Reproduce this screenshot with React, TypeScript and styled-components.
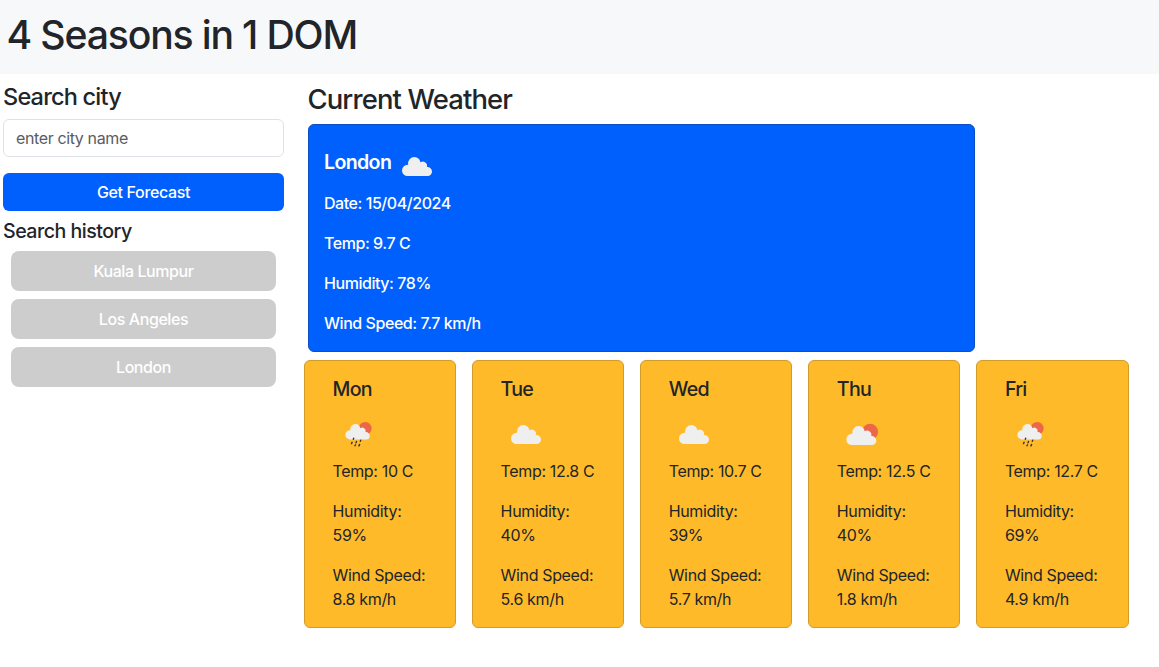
import React from "react";
import styled, { createGlobalStyle } from "styled-components";

const GlobalStyle = createGlobalStyle`
  *, *::before, *::after { box-sizing: border-box; }
  body {
    margin: 0;
    background: #fff;
    color: #212529;
    font-family: Inter, "Liberation Sans", sans-serif;
    font-size: 16px;
    line-height: 24px;
    letter-spacing: -0.35px;
  }
  h1, h2, h3, h4, h5, p { margin: 0; font-weight: 550; white-space: nowrap; }
  p { font-weight: 420; }
`;

const Header = styled.header`
  height: 74px;
  padding: 11px 6.5px;
  background: #f7f8fa;
`;

const PageTitle = styled.h1`
  font-size: 39.2px;
  line-height: 48px;
  letter-spacing: -1.18px;
`;

const Layout = styled.div`
  display: flex;
  padding-top: 8px;
`;

const Sidebar = styled.aside`
  width: 287px;
  padding: 0 3px;
  margin-right: 17px;
`;

const Heading = styled.h3<{ $size: number; $line: number; $track: number }>`
  font-size: ${(p) => p.$size}px;
  line-height: ${(p) => p.$line}px;
  letter-spacing: ${(p) => p.$track}px;
`;

const SearchForm = styled.form`
  display: flex;
  flex-direction: column;
  gap: 16px;
  margin: 8px 0;
`;

const CityInput = styled.input`
  height: 38px;
  padding: 6px 12px;
  border: 1px solid #dee2e6;
  border-radius: 6px;
  font: inherit;
  letter-spacing: inherit;
  outline: none;
  &::placeholder { color: #595c5f; opacity: 1; letter-spacing: -0.38px; }
`;

const SubmitButton = styled.button`
  height: 38px;
  border: 0;
  border-radius: 6px;
  background: #0060fd;
  color: #fff;
  font: inherit;
  font-weight: 450;
  letter-spacing: inherit;
`;

const HistoryList = styled.div`
  display: flex;
  flex-direction: column;
  gap: 8px;
  padding: 8px;
`;

const HistoryButton = styled.button`
  height: 40px;
  border: 0;
  border-radius: 8px;
  background: #cdcdcd;
  color: #fff;
  font: inherit;
  font-weight: 450;
  letter-spacing: -0.42px;
`;

const Main = styled.main`
  width: 824.5px;
`;

const Current = styled.section`
  padding-left: 4px;
`;

const CurrentHeading = styled(Heading)`
  margin-left: -0.5px;
`;

const CurrentCard = styled.div`
  width: 667px;
  height: 228px;
  margin-top: 8px;
  padding: 16px 15px;
  border: 1px solid #0a50c4;
  border-radius: 6px;
  background: #0060fd;
  color: #fff;

  p { font-weight: 470; letter-spacing: -0.45px; }
`;

const CityRow = styled.div`
  display: flex;
  align-items: flex-start;
  height: 50px;
`;

const CityName = styled.h5`
  width: 68px;
  font-size: 19.6px;
  line-height: 42px;
  letter-spacing: -0.65px;
  font-weight: 600;
`;

const Readings = styled.div`
  display: flex;
  flex-direction: column;
  gap: 16px;
`;

const Forecast = styled.section`
  display: grid;
  grid-template-columns: repeat(5, 1fr);
  gap: 16px;
  margin-top: 8px;
`;

const DayCard = styled.article`
  height: 268px;
  padding: 16px 0 16px 27.5px;
  border: 1px solid #d29c2c;
  border-radius: 6px;
  background: #ffba2a;
`;

const DayIcon = styled.div`
  height: 50px;
  margin: 8px 0 0 0.5px;
`;

const Icon = styled.svg`
  display: block;
  width: 50px;
  height: 50px;
`;

type Sky = "cloud" | "sun" | "rain";

const CloudShape = () => (
  <path
    fill="#efefef"
    d="M15.6 35.1A5.7 5.7 0 0 1 10 29.5A5.7 5.7 0 0 1 16.1 23.8A6.4 6.4 0 0 1 22.4 16.1A6.5 6.5 0 0 1 28.4 21.3A4.3 4.3 0 0 1 34.9 26.1A4.5 4.5 0 0 1 40 30.6A4.5 4.5 0 0 1 35.6 35.1Z"
  />
);

const WeatherIcon = ({ sky }: { sky: Sky }) => (
  <Icon viewBox="0 0 50 50" aria-hidden="true">
    {sky === "cloud" && <CloudShape />}
    {sky === "sun" && (
      <>
        <circle cx="33.1" cy="22.8" r="8" fill="#ec6748" />
        <g transform="translate(-0.7 1)">
          <CloudShape />
        </g>
      </>
    )}
    {sky === "rain" && (
      <>
        <circle cx="32.2" cy="19.4" r="6.4" fill="#ec6748" />
        <g transform="translate(4.3 2) scale(0.81)">
          <CloudShape />
        </g>
        <path
          d="M20.7 29.2L20.3 30.3M19.1 33.3L18.5 34.6M23.5 32.5L23 33.8M27.7 31.2L27.3 32.2M22.5 35.8L22 36.8M26.6 35.4L25.9 36.9"
          stroke="#35332f"
          strokeWidth="1.4"
          strokeLinecap="round"
        />
      </>
    )}
  </Icon>
);

const cities = ["Kuala Lumpur", "Los Angeles", "London"];

const days: { day: string; sky: Sky; temp: string; humidity: string; wind: string }[] = [
  { day: "Mon", sky: "rain", temp: "10", humidity: "59", wind: "8.8" },
  { day: "Tue", sky: "cloud", temp: "12.8", humidity: "40", wind: "5.6" },
  { day: "Wed", sky: "cloud", temp: "10.7", humidity: "39", wind: "5.7" },
  { day: "Thu", sky: "sun", temp: "12.5", humidity: "40", wind: "1.8" },
  { day: "Fri", sky: "rain", temp: "12.7", humidity: "69", wind: "4.9" },
];

export default function App() {
  return (
    <>
      <GlobalStyle />
      <Header>
        <PageTitle>4 Seasons in 1 DOM</PageTitle>
      </Header>
      <Layout>
        <Sidebar>
          <Heading $size={23.5} $line={29} $track={-0.8}>Search city</Heading>
          <SearchForm onSubmit={(e) => e.preventDefault()}>
            <CityInput placeholder="enter city name" />
            <SubmitButton>Get Forecast</SubmitButton>
          </SearchForm>
          <Heading as="h4" $size={19.6} $line={24} $track={-0.5}>Search history</Heading>
          <HistoryList>
            {cities.map((c) => (
              <HistoryButton key={c}>{c}</HistoryButton>
            ))}
          </HistoryList>
        </Sidebar>
        <Main>
          <Current>
            <CurrentHeading as="h2" $size={27.4} $line={34} $track={-0.85}>Current Weather</CurrentHeading>
            <CurrentCard>
              <CityRow>
                <CityName>London</CityName>
                <WeatherIcon sky="cloud" />
              </CityRow>
              <Readings>
                <p>Date: 15/04/2024</p>
                <p>Temp: 9.7 C</p>
                <p>Humidity: 78%</p>
                <p>Wind Speed: 7.7 km/h</p>
              </Readings>
            </CurrentCard>
          </Current>
          <Forecast>
            {days.map((d) => (
              <DayCard key={d.day}>
                <Heading as="h5" $size={19.6} $line={24} $track={-0.7}>{d.day}</Heading>
                <DayIcon>
                  <WeatherIcon sky={d.sky} />
                </DayIcon>
                <Readings>
                  <p>Temp: {d.temp} C</p>
                  <p>Humidity:<br />{d.humidity}%</p>
                  <p>Wind Speed:<br />{d.wind} km/h</p>
                </Readings>
              </DayCard>
            ))}
          </Forecast>
        </Main>
      </Layout>
    </>
  );
}
